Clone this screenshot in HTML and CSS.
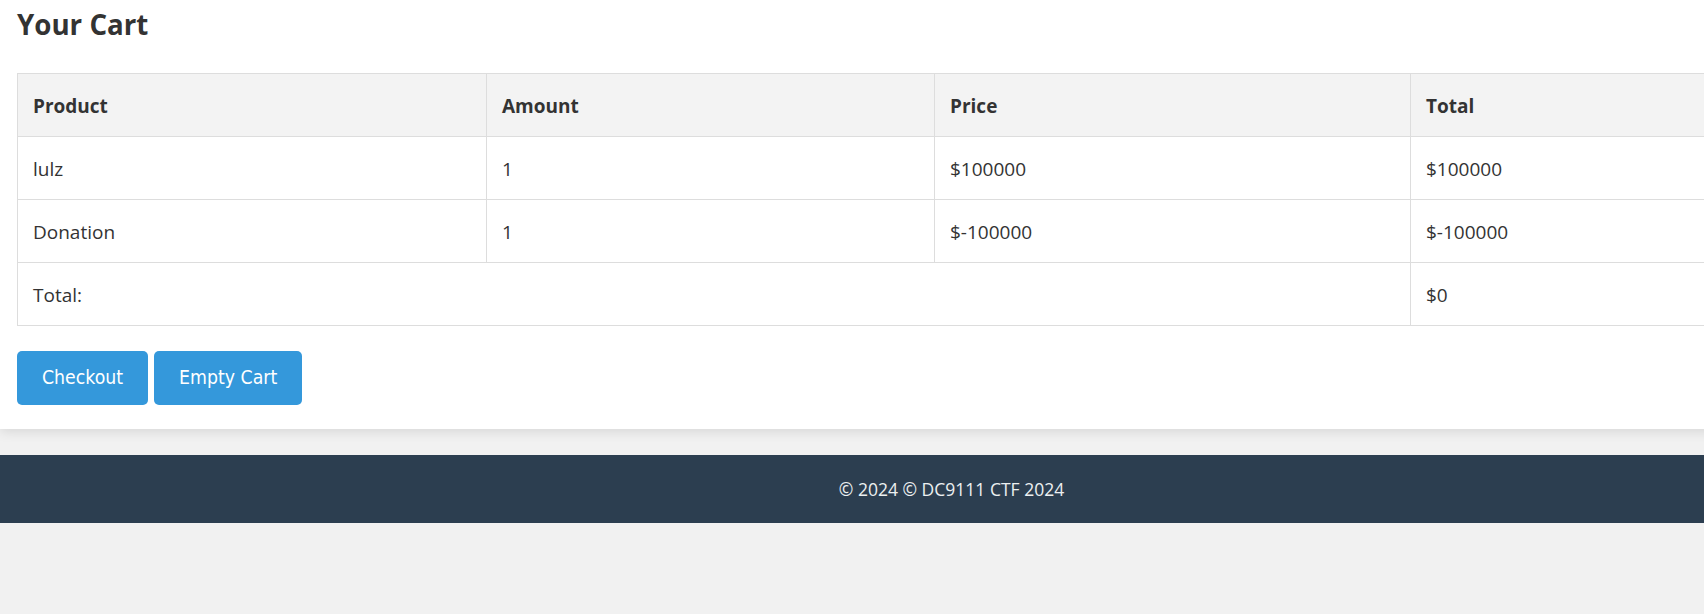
FILE: index.html
```html
<!DOCTYPE html>
<html lang="en">
<head>
<meta charset="utf-8">
<title>Your Cart</title>
<link rel="stylesheet" href="styles.css">
</head>
<body>
<div class="page">
  <main class="card">
    <h2 class="title">Your Cart</h2>
    <table class="cart">
      <colgroup>
        <col class="c1"><col class="c2"><col class="c3"><col class="c4">
      </colgroup>
      <thead>
        <tr><th>Product</th><th>Amount</th><th>Price</th><th>Total</th></tr>
      </thead>
      <tbody>
        <tr><td>lulz</td><td>1</td><td>$100000</td><td>$100000</td></tr>
        <tr><td>Donation</td><td>1</td><td>$-100000</td><td>$-100000</td></tr>
        <tr><td colspan="3">Total:</td><td>$0</td></tr>
      </tbody>
    </table>
    <div class="actions">
      <button class="btn">Checkout</button>
      <button class="btn">Empty Cart</button>
    </div>
  </main>
  <footer class="footer">© 2024 © DC9111 CTF 2024</footer>
</div>
</body>
</html>
```

FILE: styles.css
```css
html, body {
  margin: 0;
  padding: 0;
  background: #f1f1f1;
  overflow-x: hidden;
}

body {
  font-family: "Open Sans", "Noto Sans", sans-serif;
  color: #333;
}

.page {
  width: 1903px;
}

.card {
  background: #fff;
  padding: 0 17px 24px;
  box-shadow: 0 2px 12px rgba(0, 0, 0, 0.12);
  display: flex;
  flex-direction: column;
}

.title {
  margin: 0;
  padding-top: 4px;
  font-size: 27.7px;
  line-height: 40px;
  font-weight: 700;
  color: #333;
  height: 40px;
  margin-bottom: 29px;
}

.cart {
  width: 100%;
  border-collapse: collapse;
  table-layout: fixed;
  font-size: 19px;
}

.c1 { width: 469px; }
.c2 { width: 448px; }
.c3 { width: 476px; }

.cart th,
.cart td {
  border: 1px solid #ddd;
  padding: 19px 15px 17px;
  line-height: 26px;
  height: 26px;
  text-align: left;
  vertical-align: middle;
}

.cart th {
  background: #f3f3f3;
  font-weight: 700;
}

.actions {
  display: flex;
  gap: 6px;
  margin-top: 25px;
}

.btn {
  font-family: "DejaVu Sans Condensed", "DejaVu Sans", sans-serif;
  font-stretch: condensed;
  font-size: 19.3px;
  line-height: 24px;
  color: #fff;
  background: #3498db;
  border: none;
  border-radius: 5px;
  padding: 15px 25px;
  cursor: pointer;
}

.footer {
  margin-top: 26px;
  background: #2c3e50;
  color: #ecf0f1;
  text-align: center;
  height: 68px;
  line-height: 68px;
  font-size: 17.5px;
}
```
